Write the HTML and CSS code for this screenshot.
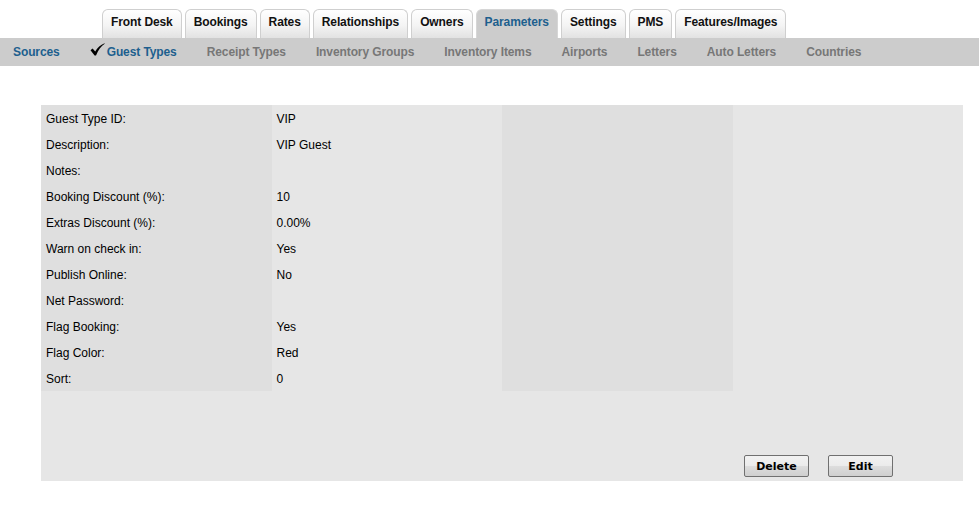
FILE: index.html
```html
<!DOCTYPE html>
<html lang="en">
<head>
	<meta charset="UTF-8">
	<title>Parameters - Guest Types</title>
	<link rel="stylesheet" href="styles.css">
</head>
<body>
	<div class="tabs">
		<a class="tab">Front Desk</a>
		<a class="tab">Bookings</a>
		<a class="tab">Rates</a>
		<a class="tab">Relationships</a>
		<a class="tab">Owners</a>
		<a class="tab active">Parameters</a>
		<a class="tab">Settings</a>
		<a class="tab">PMS</a>
		<a class="tab">Features/Images</a>
	</div>
	<div class="subnav">
		<a class="sub blue">Sources</a>
		<a class="sub blue current"><svg class="tick" width="15" height="13" viewBox="0 0 15 13"><path d="M0.5 7.2 L2.6 5.6 L5.2 8.4 C7.5 4.8 10.5 1.8 14.5 0.2 L14.7 0.7 C11.2 3 8.4 6.6 6 12.4 L4.6 12.4 Z" fill="#000"/></svg>Guest Types</a>
		<a class="sub">Receipt Types</a>
		<a class="sub">Inventory Groups</a>
		<a class="sub">Inventory Items</a>
		<a class="sub">Airports</a>
		<a class="sub">Letters</a>
		<a class="sub">Auto Letters</a>
		<a class="sub">Countries</a>
	</div>

	<div class="panel">
		<table class="details">
			<tr><td class="lbl">Guest Type ID:</td><td>VIP</td><td class="blank"></td><td></td></tr>
			<tr><td class="lbl">Description:</td><td>VIP Guest</td><td class="blank"></td><td></td></tr>
			<tr><td class="lbl">Notes:</td><td></td><td class="blank"></td><td></td></tr>
			<tr><td class="lbl">Booking Discount (%):</td><td>10</td><td class="blank"></td><td></td></tr>
			<tr><td class="lbl">Extras Discount (%):</td><td>0.00%</td><td class="blank"></td><td></td></tr>
			<tr><td class="lbl">Warn on check in:</td><td>Yes</td><td class="blank"></td><td></td></tr>
			<tr><td class="lbl">Publish Online:</td><td>No</td><td class="blank"></td><td></td></tr>
			<tr><td class="lbl">Net Password:</td><td></td><td class="blank"></td><td></td></tr>
			<tr><td class="lbl">Flag Booking:</td><td>Yes</td><td class="blank"></td><td></td></tr>
			<tr><td class="lbl">Flag Color:</td><td>Red</td><td class="blank"></td><td></td></tr>
			<tr><td class="lbl">Sort:</td><td>0</td><td class="blank"></td><td></td></tr>
		</table>
		<div class="actions">
			<button class="btn">Delete</button>
			<button class="btn">Edit</button>
		</div>
	</div>
</body>
</html>
```

FILE: styles.css
```css
* {
	box-sizing:		border-box;
}

body {
	margin:			0;
	background:		#fff;
	font-family:		"Liberation Sans", Arial, sans-serif;
	font-size:		12px;
	color:			#000;
}

/* top tabs */
.tabs {
	display:		flex;
	gap:			3px;
	padding:		9px 0 0 102px;
	height:			38px;
}

.tab {
	height:			29px;
	padding:		5px 8px 0;
	border:			1px solid #cfcfcf;
	border-bottom:		none;
	border-radius:		6px 6px 0 0;
	background:		linear-gradient(#ffffff, #f4f4f4 55%, #e2e2e2);
	font-weight:		bold;
	letter-spacing:		-0.1px;
	color:			#111;
	white-space:		nowrap;
}

.tab.active {
	background:		#cccccc;
	border-color:		#d6d6d6;
	color:			#1d5f8e;
}

/* sub navigation */
.subnav {
	display:		flex;
	align-items:		center;
	height:			28px;
	background:		#cccccc;
	padding-left:		13px;
	gap:			30px;
}

.sub {
	display:		flex;
	align-items:		center;
	font-weight:		bold;
	letter-spacing:		-0.1px;
	color:			#777;
	white-space:		nowrap;
}

.sub.blue {
	color:			#1d5f8e;
}

.tick {
	margin:			-6px 2px 0 0;
}

/* details panel */
.panel {
	margin:			39px 16px 0 41px;
	background:		#e6e6e6;
	height:			376px;
	display:		flex;
	flex-direction:		column;
}

.details {
	width:			100%;
	table-layout:		fixed;
	border-collapse:	collapse;
}

.details td {
	height:			26px;
	padding:		1px 5px 0;
	vertical-align:		middle;
}

.details .lbl,
.details .blank {
	background:		#dfdfdf;
}

.actions {
	margin-top:		auto;
	display:		flex;
	justify-content:	flex-end;
	gap:			19px;
	padding:		0 70px 4px 0;
}

.btn {
	width:			65px;
	height:			22px;
	padding:		0;
	border:			1px solid #707070;
	border-radius:		2px;
	background:		linear-gradient(#f2f2f2, #ebebeb 50%, #dddddd 51%, #cfcfcf);
	font-family:		"DejaVu Sans", Tahoma, sans-serif;
	font-size:		11px;
	font-weight:		bold;
	color:			#000;
	cursor:			pointer;
}
```
